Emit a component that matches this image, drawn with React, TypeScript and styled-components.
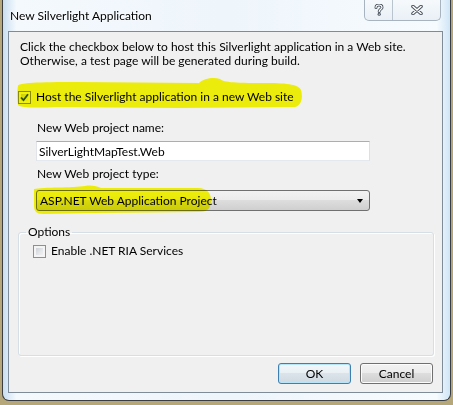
import React from 'react';
import styled, { createGlobalStyle } from 'styled-components';

const GlobalStyle = createGlobalStyle`
  html, body {
    margin: 0;
    padding: 0;
    background: #b5a77a;
  }
  body {
    font-family: Lato, "Noto Sans", sans-serif;
    font-size: 12px;
    color: #000;
  }
`;

const Window = styled.div`
  box-sizing: border-box;
  margin-left: 2px;
  width: 449px;
  height: 401px;
  padding: 0 7px 7px 5px;
  border: 1px solid #3a3d42;
  border-top: none;
  border-radius: 0 0 7px 7px;
  background: linear-gradient(90deg, #c9dff0 0%, #f4f9fd 3%, #eef5fb 50%, #f6fbfe 97%, #cfe6f6 100%);
  display: flex;
  flex-direction: column;
`;

const TitleBar = styled.div`
  height: 31px;
  display: flex;
  justify-content: space-between;
  align-items: flex-start;
`;

const Title = styled.div`
  padding: 8px 0 0 2px;
  line-height: 15px;
  font-size: 12px;
  text-shadow: 0 0 6px #fff, 0 0 3px #fff;
`;

const CaptionButtons = styled.div`
  display: flex;
  margin-right: 2px;
  height: 20px;
  border: 1px solid #a7b3bf;
  border-top: none;
  border-radius: 0 0 5px 5px;
  background: linear-gradient(#f6f9fc, #e9f0f6);
  overflow: hidden;
`;

const CaptionButton = styled.div<{ $w: number }>`
  width: ${p => p.$w}px;
  display: flex;
  align-items: center;
  justify-content: center;
  & + & {
    border-left: 1px solid #b9c4ce;
  }
`;

const Client = styled.div`
  box-sizing: border-box;
  height: 362px;
  border: 1px solid #7e8c99;
  background: #f0f0f0;
  display: flex;
  flex-direction: column;
  align-items: flex-start;
`;

const Intro = styled.p`
  margin: 8px 0 0 11px;
  line-height: 14px;
`;

const Marked = styled.div<{ $left: number; $top: number }>`
  position: relative;
  margin: ${p => p.$top}px 0 0 ${p => p.$left}px;
`;

const Marker = styled.svg<{ $left: number; $top: number }>`
  position: absolute;
  left: ${p => p.$left}px;
  top: ${p => p.$top}px;
  pointer-events: none;
  mix-blend-mode: multiply;
  overflow: visible;
`;

const CheckRow = styled.label`
  display: flex;
  align-items: center;
  gap: 5px;
  height: 14px;
  line-height: 14px;
`;

const Box = styled.span`
  box-sizing: border-box;
  width: 13px;
  height: 13px;
  border: 1px solid #8e8f8f;
  background: linear-gradient(135deg, #c4c8ce 0%, #e4e6e9 55%, #f8f8f8 100%);
  box-shadow: inset 0 0 0 2px #f4f4f4;
  display: flex;
  align-items: center;
  justify-content: center;
`;

const FieldLabel = styled.div<{ $top: number }>`
  margin: ${p => p.$top}px 0 0 28px;
  line-height: 14px;
`;

const TextInput = styled.div`
  box-sizing: border-box;
  margin: 6px 0 0 27px;
  width: 334px;
  height: 20px;
  padding-left: 2px;
  border: 1px solid;
  border-color: #abadb3 #dbdfe6 #e3e9ef #e2e3ea;
  background: #fff;
  display: flex;
  align-items: center;
`;

const Select = styled.div`
  box-sizing: border-box;
  position: relative;
  margin: 9px 0 0 27px;
  width: 334px;
  height: 21px;
  padding: 0 6px 0 3px;
  border: 1px solid #707070;
  border-radius: 3px;
  background: linear-gradient(#f2f2f2 0%, #ebebeb 50%, #dddddd 50%, #cfcfcf 100%);
  display: flex;
  align-items: center;
  justify-content: space-between;
`;

const Arrow = styled.span`
  width: 0;
  height: 0;
  border-left: 3.5px solid transparent;
  border-right: 3.5px solid transparent;
  border-top: 4px solid #000;
`;

const Group = styled.fieldset`
  box-sizing: border-box;
  margin: 14px 0 0 9px;
  width: 416px;
  height: 131px;
  padding: 5px 14px 0;
  border: 1px solid #d5dfe5;
  border-radius: 3px;
  box-shadow: inset 1px 1px 0 #fff, 1px 1px 0 #fff;
`;

const Legend = styled.legend`
  margin-left: -7px;
  padding: 0 2px;
  line-height: 14px;
`;

const Buttons = styled.div`
  align-self: stretch;
  display: flex;
  justify-content: flex-end;
  gap: 9px;
  margin: 7px 9px 0 0;
`;

const Button = styled.button<{ $default?: boolean }>`
  box-sizing: border-box;
  width: 73px;
  height: 21px;
  padding: 0;
  font: inherit;
  color: #000;
  border: 1px solid ${p => (p.$default ? '#3c7fb1' : '#707070')};
  border-radius: 3px;
  background: ${p =>
    p.$default
      ? 'linear-gradient(#f1f6f9 0%, #e9f0f4 50%, #dbe4ea 50%, #cfd9df 100%)'
      : 'linear-gradient(#f2f2f2 0%, #ebebeb 50%, #dddddd 50%, #cfcfcf 100%)'};
  box-shadow: ${p => (p.$default ? 'inset 0 0 0 1px #b5e4fb' : 'inset 0 0 0 1px #fcfcfc')};
`;

const Check = () => (
  <svg width="9" height="9" viewBox="0 0 9 9">
    <path d="M1 4.5 L3.5 7.2 L8 1.2" fill="none" stroke="#2f4f80" strokeWidth="1.8" />
  </svg>
);

const HelpGlyph = () => (
  <svg width="10" height="12" viewBox="0 0 10 12">
    <path d="M2 3.6 C2 1.6 3.4 1 5 1 C6.8 1 8 2 8 3.4 C8 5 5.2 5.4 5.2 7.4" fill="none" stroke="#4d5560" strokeWidth="3" strokeLinecap="round" />
    <path d="M2 3.6 C2 1.6 3.4 1 5 1 C6.8 1 8 2 8 3.4 C8 5 5.2 5.4 5.2 7.4" fill="none" stroke="#fff" strokeWidth="1.2" strokeLinecap="round" />
    <circle cx="5.2" cy="10.2" r="1.6" fill="#4d5560" />
    <circle cx="5.2" cy="10.2" r="0.6" fill="#fff" />
  </svg>
);

const CloseGlyph = () => (
  <svg width="12" height="10" viewBox="0 0 12 10">
    <path d="M2 1.5 L10 8.5 M10 1.5 L2 8.5" fill="none" stroke="#4d5560" strokeWidth="3.6" strokeLinecap="round" />
    <path d="M2 1.5 L10 8.5 M10 1.5 L2 8.5" fill="none" stroke="#fff" strokeWidth="1.6" strokeLinecap="round" />
  </svg>
);

const App: React.FC = () => (
  <>
    <GlobalStyle />
    <Window>
      <TitleBar>
        <Title>New Silverlight Application</Title>
        <CaptionButtons>
          <CaptionButton $w={27}>
            <HelpGlyph />
          </CaptionButton>
          <CaptionButton $w={47}>
            <CloseGlyph />
          </CaptionButton>
        </CaptionButtons>
      </TitleBar>
      <Client>
        <Intro>
          Click the checkbox below to host this Silverlight application in a Web site.
          <br />
          Otherwise, a test page will be generated during build.
        </Intro>

        <Marked $left={9} $top={22}>
          <CheckRow>
            <Box>
              <Check />
            </Box>
            Host the Silverlight application in a new Web site
          </CheckRow>
          <Marker $left={-1} $top={-13} width="286" height="32" viewBox="0 0 286 32">
            <path
              d="M1 9 C0 6 20 5 60 5 L182 6 C187 1 197 0 203 2 C207 5 212 6 250 6 C272 6 282 8 284 13 C286 20 285 28 278 30 L160 31 L40 30 C20 31 4 31 1 28 C0 22 0 14 1 9 Z"
              fill="#fbfb0c"
            />
          </Marker>
        </Marked>

        <FieldLabel $top={17}>New Web project name:</FieldLabel>
        <TextInput>SilverLightMapTest.Web</TextInput>
        <FieldLabel $top={6}>New Web project type:</FieldLabel>
        <Select>
          ASP.NET Web Application Project
          <Arrow />
          <Marker $left={-4} $top={-6} width="180" height="30" viewBox="0 0 180 30">
            <path
              d="M1 4 C10 2 40 3 52 1 C58 0 64 1 68 3 L165 3 C174 3 178 8 178 15 C178 24 174 27 165 27 L60 28 L10 29 C3 29 1 26 1 20 Z"
              fill="#fbfb0c"
            />
          </Marker>
        </Select>

        <Group>
          <Legend>Options</Legend>
          <CheckRow>
            <Box />
            Enable .NET RIA Services
          </CheckRow>
        </Group>

        <Buttons>
          <Button $default>OK</Button>
          <Button>Cancel</Button>
        </Buttons>
      </Client>
    </Window>
  </>
);

export default App;
